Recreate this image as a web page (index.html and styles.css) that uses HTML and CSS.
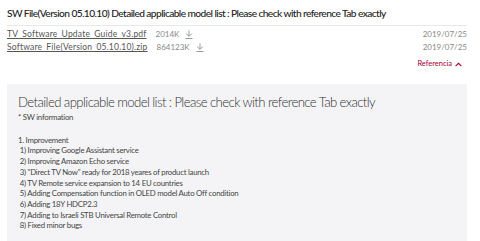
FILE: index.html
```html
<!DOCTYPE html>
<html>

<head>
    <title>SW File</title>
    <link rel="stylesheet" href="styles.css">
</head>

<body>
    <div class="page">
        <h2 class="title">SW File(Version 05.10.10) Detailed applicable model list : Please check with reference Tab exactly</h2>

        <ul class="files">
            <li>
                <span class="file">
                    <a href="#">TV_Software_Update_Guide_v3.pdf</a>
                    <span class="size">2014K</span>
                    <svg class="down" width="8" height="9" viewBox="0 0 8 9">
                        <path d="M4 0.5V6.2M1.2 3.6L4 6.4L6.8 3.6M0.5 8.5H7.5" fill="none" stroke="#9a9a9a" stroke-width="1"/>
                    </svg>
                </span>
                <span class="date">2019/07/25</span>
            </li>
            <li>
                <span class="file">
                    <a href="#">Software_File(Version_05.10.10).zip</a>
                    <span class="size">864123K</span>
                    <svg class="down" width="8" height="9" viewBox="0 0 8 9">
                        <path d="M4 0.5V6.2M1.2 3.6L4 6.4L6.8 3.6M0.5 8.5H7.5" fill="none" stroke="#9a9a9a" stroke-width="1"/>
                    </svg>
                </span>
                <span class="date">2019/07/25</span>
            </li>
        </ul>

        <div class="ref">
            <a href="#">Referencia
                <svg class="chevron" width="7" height="5" viewBox="0 0 7 5">
                    <path d="M0.6 4.2L3.5 1.3L6.4 4.2" fill="none" stroke="#a50034" stroke-width="1.1"/>
                </svg>
            </a>
        </div>

        <div class="detail">
            <h3>Detailed applicable model list : Please check with reference Tab exactly</h3>
            <p class="note">* SW information</p>
            <p class="notes">
                1. Improvement<br>
                &nbsp;1) Improving Google Assistant service<br>
                &nbsp;2) Improving Amazon Echo service<br>
                &nbsp;3) "Direct TV Now" ready for 2018 yeares of product launch<br>
                &nbsp;4) TV Remote service expansion to 14 EU countries<br>
                &nbsp;5) Adding Compensation function in OLED model Auto Off condition<br>
                &nbsp;6) Adding 18Y HDCP2.3<br>
                &nbsp;7) Adding to Israeli STB Universal Remote Control<br>
                &nbsp;8) Fixed minor bugs
            </p>
        </div>
    </div>
</body>

</html>
```

FILE: styles.css
```css
body {
    margin: 0;
    font-family: Lato, "Open Sans", sans-serif;
    color: #444;
}

.page {
    padding: 0 13px 0 7px;
}

.title {
    margin: 0;
    padding: 5px 0 4px;
    font-size: 10.2px;
    line-height: 16px;
    font-weight: 500;
    letter-spacing: -0.58px;
    color: #222;
    border-bottom: 1px solid #e8e8e8;
    white-space: nowrap;
}

.files {
    list-style: none;
    margin: 0;
    padding: 2px 0 0;
}

.files li {
    display: flex;
    justify-content: space-between;
    align-items: center;
    height: 13px;
    font-size: 8px;
    line-height: 13px;
}

.file {
    display: flex;
    align-items: center;
}

.file a {
    color: #555;
    font-size: 8.5px;
    letter-spacing: 0.2px;
    text-decoration: underline;
}

.size {
    margin-left: 9px;
    color: #888;
}

.down {
    margin-left: 6px;
}

.date {
    color: #888;
}

.ref {
    margin-top: 3px;
    text-align: right;
    font-size: 7.5px;
    line-height: 13px;
    padding-right: 5px;
}

.ref a {
    color: #a50034;
    text-decoration: none;
}

.chevron {
    margin-left: 1px;
    vertical-align: -1px;
}

.detail {
    margin-top: 14px;
    background: #f4f4f6;
    padding: 8px 11px 20px;
}

.detail h3 {
    margin: 0;
    font-size: 13.2px;
    line-height: 20px;
    font-weight: 300;
    letter-spacing: -0.6px;
    color: #333;
    white-space: nowrap;
}

.detail p {
    margin: 0;
    font-size: 7.8px;
    line-height: 10.7px;
    letter-spacing: -0.25px;
    color: #444;
}

.note {
    margin-bottom: 12px !important;
}
```
